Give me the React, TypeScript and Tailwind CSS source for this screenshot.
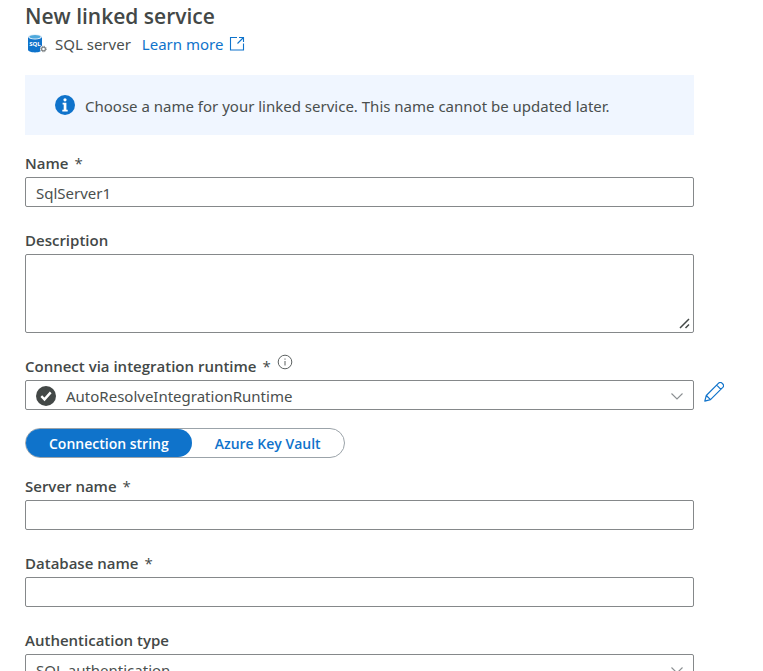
import React, { useState } from "react";

const fieldClass =
  "block w-full rounded-[2px] border border-[#85888a] bg-white px-2.5 pt-0.5 text-[15px] text-[#4a4f4e] outline-none focus:border-[#0f73cb]";

function Label({ htmlFor, required, children }: { htmlFor: string; required?: boolean; children: React.ReactNode }) {
  return (
    <label htmlFor={htmlFor} className="font-['Open_Sans','Noto_Sans',sans-serif] text-[15px] leading-5 font-semibold text-[#434847]">
      {children}
      {required && <span className="ml-1.5 font-normal">*</span>}
    </label>
  );
}

function Chevron() {
  return (
    <svg
      className="pointer-events-none absolute top-3 right-2.5 h-2 w-3.5"
      viewBox="0 0 14 8"
      fill="none"
      stroke="#8b8f92"
      strokeWidth="1.1"
      aria-hidden="true"
    >
      <path d="M1.500 1.500 7 7l5.500-5.500" />
    </svg>
  );
}

function SqlServerIcon() {
  return (
    <svg className="h-5 w-[22px]" viewBox="0 0 22 20" aria-hidden="true">
      <path d="M3 2.800v13c0 1.500 3 2.600 7 2.600s7-1.100 7-2.600v-13Z" fill="#0f73cb" />
      <ellipse cx="10" cy="2.800" rx="7" ry="2.600" fill="#e3effa" />
      <ellipse cx="10" cy="2.800" rx="5.600" ry="1.800" fill="#4fa9dc" />
      <text x="10" y="12" textAnchor="middle" fontSize="6" fontWeight="700" fontFamily="Open Sans, sans-serif" fill="#fff">
        SQL
      </text>
      <circle cx="18.500" cy="15" r="3.500" fill="#fff" />
      <circle cx="18.500" cy="15" r="1.900" fill="none" stroke="#7c8082" strokeWidth="1.200" />
      <circle cx="18.500" cy="15" r="2.800" fill="none" stroke="#7c8082" strokeWidth="1" strokeDasharray="1.100 1.100" />
    </svg>
  );
}

function ExternalIcon() {
  return (
    <svg className="h-4 w-4" viewBox="0 0 16 16" fill="none" stroke="#0f73cb" strokeWidth="1.1" aria-hidden="true">
      <path d="M8 1.500H1.500v12.500h13V7.500M10 1.500h4.500V6M14.500 1.500 8.500 7.500" />
    </svg>
  );
}

function InfoFilledIcon() {
  return (
    <svg className="h-5 w-5 shrink-0" viewBox="0 0 20 20" aria-hidden="true">
      <circle cx="10" cy="10" r="10" fill="#0f73cb" />
      <circle cx="10" cy="4.800" r="1.600" fill="#fff" />
      <path d="M7.600 7.800h3.800v7h1.300V16.500H7.300v-1.700h1.400V9.500H7.600Z" fill="#fff" />
    </svg>
  );
}

function InfoIcon() {
  return (
    <svg className="h-4 w-4" viewBox="0 0 16 16" fill="none" stroke="#5c6161" aria-hidden="true">
      <circle cx="8" cy="8" r="6.800" />
      <path d="M8 7v4.500M8 4.500v1.200" />
    </svg>
  );
}

function CheckBadge() {
  return (
    <svg className="pointer-events-none absolute top-1.5 left-[11px] h-5 w-5" viewBox="0 0 20 20" aria-hidden="true">
      <circle cx="10" cy="10" r="10" fill="#434847" />
      <path d="m5.300 10.200 3.200 3.200 6.200-7" fill="none" stroke="#fff" strokeWidth="2.400" />
    </svg>
  );
}

function PencilIcon() {
  return (
    <svg className="h-5 w-5" viewBox="0 0 20 20" fill="none" stroke="#0f73cb" strokeWidth="1.200" strokeLinejoin="round" aria-hidden="true">
      <path d="M.8 19.200 2.300 13.500 14.600 1.200c1-1 2.500-.9 3.400 0l.8.800c.9.900.9 2.400 0 3.400L6.500 17.700ZM2.300 13.500 6.500 17.700M12.700 3.100l4.200 4.200" />
    </svg>
  );
}

export default function App() {
  const [mode, setMode] = useState("connection");
  const [name, setName] = useState("SqlServer1");
  const selected = "bg-[#0f73cb] text-white";
  const idle = "text-[#0f73cb]";

  return (
    <main className="bg-white pr-[69px] pl-[25px] font-['Noto_Sans','Open_Sans',sans-serif] text-[15px] text-[#4a4f4e]">
      <header>
        <h1 className="font-['Open_Sans','Noto_Sans',sans-serif] text-[21px] leading-8 font-semibold text-[#434847]">
          New linked service
        </h1>
        <div className="flex h-6 items-center">
          <SqlServerIcon />
          <span className="ml-2">SQL server</span>
          <a href="#learn-more" className="ml-[11px] flex items-center gap-1.5 text-[#0f73cb]">
            Learn more
            <ExternalIcon />
          </a>
        </div>
      </header>

      <div role="note" className="mt-[19px] flex h-[60px] items-center gap-2.5 bg-[#f0f6ff] px-[30px]">
        <InfoFilledIcon />
        <p className="pt-0.5">Choose a name for your linked service. This name cannot be updated later.</p>
      </div>

      <form className="mt-[18px]" onSubmit={(e) => e.preventDefault()}>
        <div className="flex flex-col gap-[23px]">
          <div className="flex flex-col gap-1">
            <Label htmlFor="name" required>Name</Label>
            <input id="name" className={`${fieldClass} h-[30px]`} value={name} onChange={(e) => setName(e.target.value)} />
          </div>

          <div className="flex flex-col gap-1">
            <Label htmlFor="description">Description</Label>
            <div className="relative">
              <textarea id="description" className={`${fieldClass} h-[79px] resize-none`} />
              <svg
                className="pointer-events-none absolute right-[3px] bottom-[3px] h-3 w-3"
                viewBox="0 0 12 12"
                stroke="#434847"
                strokeWidth="1.500"
                aria-hidden="true"
              >
                <path d="m1 10 9-9M6.500 10 10 6.500" />
              </svg>
            </div>
          </div>

          <div className="flex flex-col gap-1">
            <div className="flex h-5 items-start gap-1.5">
              <Label htmlFor="runtime" required>Connect via integration runtime</Label>
              <button type="button" aria-label="About integration runtimes" className="-mt-0.5">
                <InfoIcon />
              </button>
            </div>
            <div className="relative">
              <CheckBadge />
              <select id="runtime" className={`${fieldClass} h-[30px] appearance-none pl-10`}>
                <option>AutoResolveIntegrationRuntime</option>
              </select>
              <Chevron />
              <button type="button" aria-label="Edit integration runtime" className="absolute top-0.5 left-full ml-2.5">
                <PencilIcon />
              </button>
            </div>
          </div>
        </div>

        <div className="my-[18px] flex h-[30px] w-fit rounded-full border border-[#9ba3a9] font-['Open_Sans','Noto_Sans',sans-serif] text-sm font-semibold">
          <button
            type="button"
            aria-pressed={mode === "connection"}
            onClick={() => setMode("connection")}
            className={`rounded-full px-[23px] pt-0.5 ${mode === "connection" ? selected : idle}`}
          >
            Connection string
          </button>
          <button
            type="button"
            aria-pressed={mode === "vault"}
            onClick={() => setMode("vault")}
            className={`rounded-full px-[23px] pt-0.5 ${mode === "vault" ? selected : idle}`}
          >
            Azure Key Vault
          </button>
        </div>

        <div className="flex flex-col gap-[23px]">
          <div className="flex flex-col gap-1">
            <Label htmlFor="server" required>Server name</Label>
            <input id="server" className={`${fieldClass} h-[30px]`} />
          </div>
          <div className="flex flex-col gap-1">
            <Label htmlFor="database" required>Database name</Label>
            <input id="database" className={`${fieldClass} h-[30px]`} />
          </div>
          <div className="flex flex-col gap-1">
            <Label htmlFor="auth">Authentication type</Label>
            <div className="relative">
              <select id="auth" className={`${fieldClass} h-[30px] appearance-none`}>
                <option>SQL authentication</option>
              </select>
              <Chevron />
            </div>
          </div>
        </div>
      </form>
    </main>
  );
}
